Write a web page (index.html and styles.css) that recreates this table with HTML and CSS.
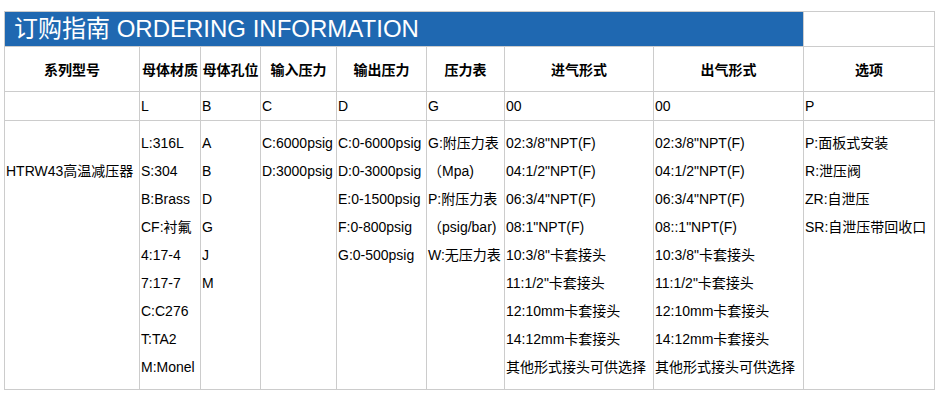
FILE: index.html
```html
<!DOCTYPE html>
<html lang="zh-CN">
<head>
<meta charset="utf-8">
<title>订购指南</title>
<link rel="stylesheet" href="styles.css">
</head>
<body>
<div class="wrap">
<table class="order">
  <colgroup>
    <col class="c1"><col class="c2"><col class="c3"><col class="c4"><col class="c5"><col class="c6"><col class="c7"><col class="c8"><col class="c9">
  </colgroup>
  <tr class="title-row">
    <td class="title" colspan="8">订购指南 ORDERING INFORMATION</td>
    <td class="blank"></td>
  </tr>
  <tr class="head-row">
    <th>系列型号</th>
    <th>母体材质</th>
    <th>母体孔位</th>
    <th>输入压力</th>
    <th>输出压力</th>
    <th>压力表</th>
    <th>进气形式</th>
    <th>出气形式</th>
    <th>选项</th>
  </tr>
  <tr class="code-row">
    <td></td>
    <td>L</td>
    <td>B</td>
    <td>C</td>
    <td>D</td>
    <td>G</td>
    <td>00</td>
    <td>00</td>
    <td>P</td>
  </tr>
  <tr class="body-row">
    <td class="model"><div class="ln">HTRW43高温减压器</div></td>
    <td>
      <div class="ln">L:316L</div>
      <div class="ln">S:304</div>
      <div class="ln">B:Brass</div>
      <div class="ln">CF:衬氟</div>
      <div class="ln">4:17-4</div>
      <div class="ln">7:17-7</div>
      <div class="ln">C:C276</div>
      <div class="ln">T:TA2</div>
      <div class="ln">M:Monel</div>
    </td>
    <td>
      <div class="ln">A</div>
      <div class="ln">B</div>
      <div class="ln">D</div>
      <div class="ln">G</div>
      <div class="ln">J</div>
      <div class="ln">M</div>
    </td>
    <td>
      <div class="ln">C:6000psig</div>
      <div class="ln">D:3000psig</div>
    </td>
    <td>
      <div class="ln">C:0-6000psig</div>
      <div class="ln">D:0-3000psig</div>
      <div class="ln">E:0-1500psig</div>
      <div class="ln">F:0-800psig</div>
      <div class="ln">G:0-500psig</div>
    </td>
    <td>
      <div class="ln">G:附压力表</div>
      <div class="ln">（Mpa)</div>
      <div class="ln">P:附压力表</div>
      <div class="ln">（psig/bar)</div>
      <div class="ln">W:无压力表</div>
    </td>
    <td>
      <div class="ln">02:3/8"NPT(F)</div>
      <div class="ln">04:1/2"NPT(F)</div>
      <div class="ln">06:3/4"NPT(F)</div>
      <div class="ln">08:1"NPT(F)</div>
      <div class="ln">10:3/8"卡套接头</div>
      <div class="ln">11:1/2"卡套接头</div>
      <div class="ln">12:10mm卡套接头</div>
      <div class="ln">14:12mm卡套接头</div>
      <div class="ln">其他形式接头可供选择</div>
    </td>
    <td>
      <div class="ln">02:3/8"NPT(F)</div>
      <div class="ln">04:1/2"NPT(F)</div>
      <div class="ln">06:3/4"NPT(F)</div>
      <div class="ln">08::1"NPT(F)</div>
      <div class="ln">10:3/8"卡套接头</div>
      <div class="ln">11:1/2"卡套接头</div>
      <div class="ln">12:10mm卡套接头</div>
      <div class="ln">14:12mm卡套接头</div>
      <div class="ln">其他形式接头可供选择</div>
    </td>
    <td>
      <div class="ln">P:面板式安装</div>
      <div class="ln">R:泄压阀</div>
      <div class="ln">ZR:自泄压</div>
      <div class="ln">SR:自泄压带回收口</div>
    </td>
  </tr>
</table>
</div>
</body>
</html>
```

FILE: styles.css
```css
html, body {
  margin: 0;
  padding: 0;
  background: #fff;
}

.wrap {
  padding: 11px 0 0 4px;
}

.order {
  border-collapse: collapse;
  table-layout: fixed;
  width: 930px;
  font-family: "Liberation Sans", Arial, "Noto Sans CJK SC", sans-serif;
  font-size: 14px;
  color: #000;
}

.c1 { width: 135px; }
.c2 { width: 61px; }
.c3 { width: 60px; }
.c4 { width: 76px; }
.c5 { width: 90px; }
.c6 { width: 78px; }
.c7 { width: 149px; }
.c8 { width: 150px; }
.c9 { width: 131px; }

.order td,
.order th {
  border: 1px solid #cccccc;
  padding: 0 0 0 1px;
  text-align: left;
  white-space: nowrap;
  overflow: hidden;
}

.title-row td {
  height: 34px;
}

.order td.title {
  background: #1f68b1;
  color: #fff;
  font-size: 24px;
  line-height: 34px;
  padding-left: 9px;
  border-color: #1f68b1 #cccccc #cccccc #cccccc;
  border-top-color: #cccccc;
}

.head-row th {
  height: 44px;
  text-align: center;
  font-weight: bold;
  font-size: 14px;
  padding: 0;
}

.code-row td {
  height: 28px;
  line-height: 28px;
}

.body-row td {
  vertical-align: top;
  padding-top: 8px;
  padding-bottom: 8px;
}

.body-row td.model {
  padding-top: 36px;
}

.ln {
  line-height: 28px;
  height: 28px;
}
```
